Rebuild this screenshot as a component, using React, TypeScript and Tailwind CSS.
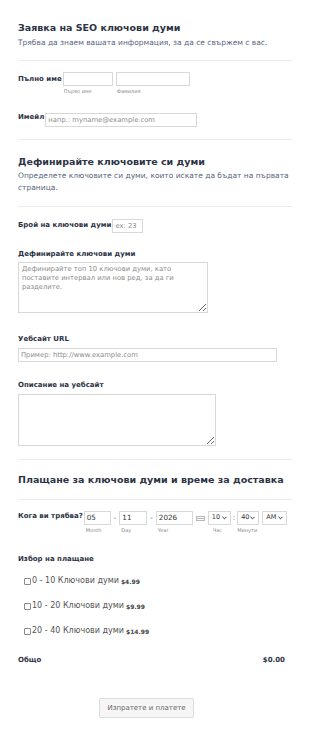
import React from "react";

const font = { fontFamily: '"DejaVu Sans", Verdana, sans-serif' };

function Sep() {
  return <div className="h-px bg-[#ececec] w-full" />;
}

function Label({ children, className = "" }: { children: React.ReactNode; className?: string }) {
  return <div className={"text-[7px] leading-[10px] font-bold text-[#2c3345] whitespace-nowrap " + className}>{children}</div>;
}

function Box({ w, children, h = "h-[14px]", ph = false }: { w: string; children?: React.ReactNode; h?: string; ph?: boolean }) {
  return (
    <div className={`${w} ${h} border border-[#d8d8d8] bg-white flex items-center px-[2px] text-[6.8px] whitespace-nowrap overflow-hidden ${ph ? "text-[#8c8c8c]" : "text-[#333]"}`}>
      {children}
    </div>
  );
}

function Sel({ w, v }: { w: string; v: string }) {
  return (
    <div className={`${w} h-[14px] border border-[#d8d8d8] bg-white flex items-center justify-between px-[3px] text-[6.5px] text-[#333]`}>
      <span>{v}</span>
      <svg width="5" height="4" viewBox="0 0 6 4"><path d="M0.5 0.5 L3 3 L5.5 0.5" fill="none" stroke="#333" strokeWidth="1.2" /></svg>
    </div>
  );
}

function Check({ text, price }: { text: string; price: string }) {
  return (
    <div className="flex items-center pl-[6px] h-[12px]">
      <span className="w-[7px] h-[7px] border border-[#8a8a8a] rounded-[1px] mr-[1px] bg-white" />
      <span className="text-[8px] text-[#555]">{text}</span>
      <span className="text-[6px] font-bold text-[#444] ml-[2px]">{price}</span>
    </div>
  );
}

function H({ children, className = "" }: { children: React.ReactNode; className?: string }) {
  return <div className={"text-[9.5px] leading-[13px] font-bold text-[#2c3345] " + className}>{children}</div>;
}

export default function App() {
  return (
    <div className="w-[310px] h-[736px] bg-white overflow-hidden" style={font}>
      <div className="flex flex-col pl-[18px] pr-[18px] pt-[21px]">
        <H>Заявка на SEO ключови думи</H>
        <div className="text-[7.5px] leading-[12px] text-[#57647e] mt-[3px]">Трябва да знаем вашата информация, за да се свържем с вас.</div>
        <div className="mt-[11px]"><Sep /></div>

        <div className="flex mt-[11px]">
          <Label className="mt-[2px]">Пълно име</Label>
          <div className="flex flex-col ml-[1px]">
            <Box w="w-[50px]" />
            <div className="text-[5px] leading-[8px] text-[#8c8c8c] mt-[1px] pl-[1px]">Първо име</div>
          </div>
          <div className="flex flex-col ml-[3px]">
            <Box w="w-[74px]" />
            <div className="text-[5px] leading-[8px] text-[#8c8c8c] mt-[1px] pl-[1px]">Фамилия</div>
          </div>
        </div>

        <div className="flex mt-[18px]">
          <Label className="mt-[-1px]">Имейл</Label>
          <div className="ml-[1px]"><Box w="w-[152px]" ph>напр.: myname@example.com</Box></div>
        </div>

        <div className="mt-[12px]"><Sep /></div>

        <H className="mt-[15px]">Дефинирайте ключовите си думи</H>
        <div className="text-[7.5px] leading-[12px] text-[#57647e] mt-[2px]">Определете ключовите си думи, които искате да бъдат на първата страница.</div>
        <div className="mt-[12px]"><Sep /></div>

        <div className="flex mt-[12px]">
          <Label className="mt-[1px]">Брой на ключови думи</Label>
          <div className="ml-[1px] mt-[0px]"><Box w="w-[31px]" ph>ex: 23</Box></div>
        </div>

        <Label className="mt-[16px]">Дефинирайте ключови думи</Label>
        <textarea
          className="mt-[3px] w-[190px] h-[51px] border border-[#d8d8d8] text-[6.8px] leading-[9px] px-[3px] py-[2px] text-[#333] placeholder:text-[#8c8c8c] outline-none resize-y"
          style={font}
          placeholder="Дефинирайте топ 10 ключови думи, като поставите интервал или нов ред, за да ги разделите."
        />

        <Label className="mt-[21px]">Уебсайт URL</Label>
        <div className="mt-[4px]"><Box w="w-[259px]" ph>Пример: http://www.example.com</Box></div>

        <Label className="mt-[18px]">Описание на уебсайт</Label>
        <textarea
          className="mt-[4px] w-[198px] h-[52px] border border-[#d8d8d8] text-[7px] px-[3px] py-[2px] outline-none"
          style={font}
        />

        <div className="mt-[13px]"><Sep /></div>
        <H className="mt-[13px]">Плащане за ключови думи и време за доставка</H>
        <div className="mt-[13px]"><Sep /></div>

        <div className="flex items-start mt-[11px]">
          <Label className="mt-[0px]">Кога ви трябва?</Label>
          <div className="flex flex-col ml-[1px]">
            <Box w="w-[27px]"><span className="text-[7.2px]">05</span></Box>
            <div className="text-[5px] leading-[8px] text-[#8c8c8c] mt-[1px] pl-[2px]">Month</div>
          </div>
          <div className="text-[7px] text-[#555] mx-[3px] leading-[14px]">-</div>
          <div className="flex flex-col">
            <Box w="w-[28px]"><span className="text-[7.2px]">11</span></Box>
            <div className="text-[5px] leading-[8px] text-[#8c8c8c] mt-[1px] pl-[2px]">Day</div>
          </div>
          <div className="text-[7px] text-[#555] mx-[3px] leading-[14px]">-</div>
          <div className="flex flex-col">
            <Box w="w-[37px]"><span className="text-[7.2px]">2026</span></Box>
            <div className="text-[5px] leading-[8px] text-[#8c8c8c] mt-[1px] pl-[2px]">Year</div>
          </div>
          <div className="mx-[3px] h-[14px] flex items-center">
            <svg width="9" height="5" viewBox="0 0 9 5"><rect x="0.5" y="0.5" width="8" height="4" fill="none" stroke="#b8b8b8" /><line x1="0.5" y1="2.5" x2="8.5" y2="2.5" stroke="#b8b8b8" /></svg>
          </div>
          <div className="flex flex-col">
            <Sel w="w-[23px]" v="10" />
            <div className="text-[5px] leading-[8px] text-[#8c8c8c] mt-[1px] pl-[5px]">Час</div>
          </div>
          <div className="text-[7px] text-[#555] mx-[2px] leading-[14px]">:</div>
          <div className="flex flex-col">
            <Sel w="w-[22px]" v="40" />
            <div className="text-[5px] leading-[8px] text-[#8c8c8c] mt-[1px] pl-[0px]">Минути</div>
          </div>
          <div className="ml-[3px]"><Sel w="w-[25px]" v="AM" /></div>
        </div>

        <Label className="mt-[20px]">Избор на плащане</Label>
        <div className="flex flex-col gap-[13px] mt-[11px]">
          <Check text="0 - 10 Ключови думи" price="$4.99" />
          <Check text="10 - 20 Ключови думи" price="$9.99" />
          <Check text="20 - 40 Ключови думи" price="$14.99" />
        </div>

        <div className="flex justify-between items-center mt-[18px] pr-[7px]">
          <Label>Общо</Label>
          <Label>$0.00</Label>
        </div>

        <div className="flex mt-[33px] pl-[81px]">
          <div className="w-[95px] h-[20px] border border-[#dcdcdc] bg-[#f6f6f6] rounded-[2px] flex items-center justify-center text-[7px] text-[#666]">
            Изпратете и платете
          </div>
        </div>
      </div>
    </div>
  );
}
